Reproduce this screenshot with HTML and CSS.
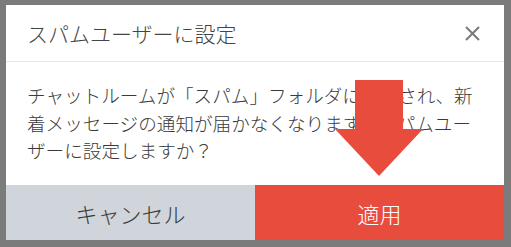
FILE: index.html
```html
<!DOCTYPE html>
<html lang="ja">
<head>
<meta charset="utf-8">
<link rel="stylesheet" href="styles.css">
</head>
<body>
<div class="dialog">
  <div class="header">
    <div class="title">スパムユーザーに設定</div>
    <svg class="close" width="15" height="15" viewBox="0 0 15 15"><path d="M1 1L14 14M14 1L1 14" stroke="#7a7a7a" stroke-width="2" fill="none"/></svg>
  </div>
  <div class="body">チャットルームが「スパム」フォルダに移動され、新着メッセージの通知が届かなくなります。スパムユーザーに設定しますか？</div>
  <div class="footer">
    <div class="btn cancel">キャンセル</div>
    <div class="btn apply">適用</div>
  </div>
  <svg class="arrow" width="88" height="96" viewBox="0 0 88 96"><polygon points="20,0 68,0 68,49 88,49 44,96 0,49 20,49" fill="#e84c3d"/></svg>
</div>
</body>
</html>
```
FILE: styles.css
```css
html, body {
  margin: 0;
  padding: 0;
}
body {
  background: #7b7b7b;
  width: 511px;
  height: 247px;
  padding: 5px 7px 7px 6px;
  box-sizing: border-box;
  font-family: "Noto Sans CJK JP", "Noto Sans", sans-serif;
  font-weight: 300;
  overflow: hidden;
}
.dialog {
  position: relative;
  width: 498px;
  height: 235px;
  background: #fff;
  display: flex;
  flex-direction: column;
}
.header {
  height: 56px;
  border-bottom: 1px solid #e8e8e8;
  display: flex;
  align-items: center;
  justify-content: space-between;
  padding: 0 24px 0 21px;
  box-sizing: content-box;
}
.title {
  font-size: 21px;
  color: #444;
}
.close {
  display: block;
}
.body {
  flex: 1;
  padding: 19px 21px 0 21px;
  font-size: 18.6px;
  line-height: 27.5px;
  color: #3a3a3a;
}
.footer {
  height: 55px;
  display: flex;
}
.btn {
  flex: 1;
  display: flex;
  align-items: center;
  justify-content: center;
  font-size: 22px;
}
.cancel {
  background: #d0d4db;
  color: #3a3a3a;
}
.apply {
  background: #e84c3d;
  color: #fff;
}
.arrow {
  position: absolute;
  left: 329px;
  top: 75px;
}
```
